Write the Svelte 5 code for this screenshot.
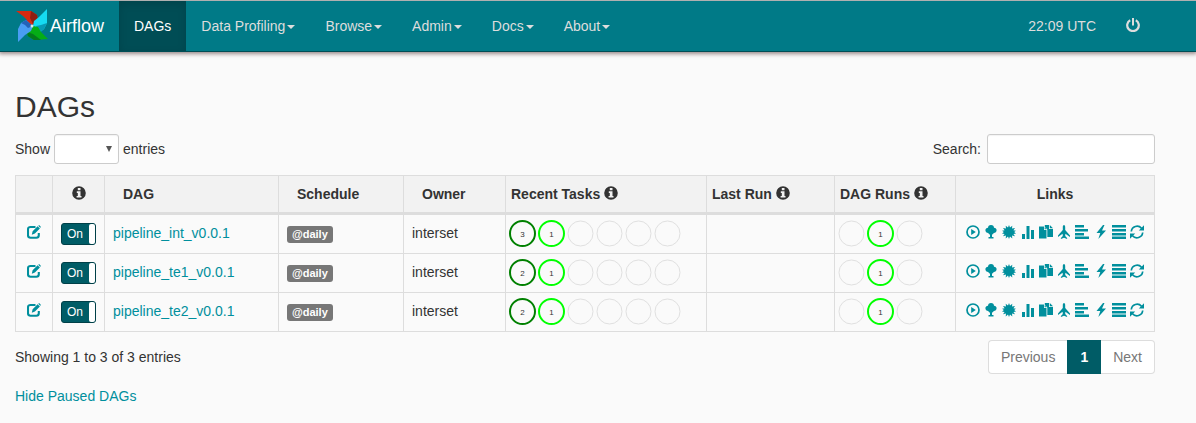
<script>
  const menus = ['Data Profiling', 'Browse', 'Admin', 'Docs', 'About'];

  const dags = $state([
    { id: 'pipeline_int_v0.0.1', on: true, schedule: '@daily', owner: 'interset', tasks: [3, 1, 0, 0, 0, 0], runs: [0, 1, 0] },
    { id: 'pipeline_te1_v0.0.1', on: true, schedule: '@daily', owner: 'interset', tasks: [2, 1, 0, 0, 0, 0], runs: [0, 1, 0] },
    { id: 'pipeline_te2_v0.0.1', on: true, schedule: '@daily', owner: 'interset', tasks: [2, 1, 0, 0, 0, 0], runs: [0, 1, 0] }
  ]);

  const taskColors = ['green', 'lime', 'red', 'gold', 'pink', 'gray'];
  const runColors = ['green', 'lime', 'red'];
  const links = [
    ['play', 'Trigger Dag'],
    ['tree', 'Tree View'],
    ['sun', 'Graph View'],
    ['stats', 'Tasks Duration'],
    ['copy', 'Task Tries'],
    ['plane', 'Landing Times'],
    ['align', 'Gantt View'],
    ['flash', 'Code View'],
    ['list', 'Logs'],
    ['refresh', 'Refresh']
  ];
</script>

{#snippet icon(name)}
  <svg class="icon" viewBox="0 0 14 14" width="14" height="14" fill="currentColor" aria-hidden="true">
    {#if name === 'info'}
      <path fill-rule="evenodd" d="M7 .2a6.8 6.8 0 1 0 0 13.600A6.800 6.800 0 0 0 7 .2ZM5.800 2h2.700v2.200H5.800ZM4.800 5.300h3.700v4.600h1v1.600H4.600V9.900h1.200V6.900h-1Z" />
    {:else if name === 'power'}
      <path d="M6 0h2v7.500H6Z" />
      <path d="M4.200 2.200a5.800 5.800 0 1 0 5.600 0" fill="none" stroke="currentColor" stroke-width="2.200" />
    {:else if name === 'edit'}
      <path d="M8.500 2H3.500Q1 2 1 4.500v5.800Q1 12.800 3.500 12.800h5.800q2.500 0 2.500-2.500V8" fill="none" stroke="currentColor" stroke-width="2.100" />
      <path d="m4.800 9.700.8-3.400 5-5 2.300 2.300-5 5ZM11.300.8l.8-.8L14 1.900l-.8.8Z" />
    {:else if name === 'play'}
      <circle cx="7" cy="7" r="6" fill="none" stroke="currentColor" stroke-width="1.700" />
      <path d="M5.200 4 9.800 7l-4.600 3Z" />
    {:else if name === 'tree'}
      <path d="M7 0c2 0 3 1.200 3 2.700 1.600 0 2.600 1 2.600 2.500S11.400 8 9.800 8C9 9.200 8.400 9.600 8 9.600V12h1.500v1.500h-5V12H6V9.600C5.400 9.600 5 9 4.200 8 2.600 8 1.400 6.800 1.400 5.200S2.500 2.700 4 2.700C4 1.200 5 0 7 0Z" />
    {:else if name === 'sun'}
      <path d="m7 0 1 2.600L10.300.7l-.3 2.900 3-.6-1.600 2.200 2.600.5L12.100 7l1.900 1.600-2.600.3L13 11.300l-3-.7.3 2.800L8 11.500 7 14l-1-2.500-2.300 1.900.3-2.800-3 .7 1.600-2.400L0 8.600 1.900 7 0 5.700l2.600-.5L1 3l3 .6-.3-2.900L6 2.600Z" />
    {:else if name === 'stats'}
      <path d="M1 9h3v5H1ZM5.500 1h3v13h-3ZM10 5h3v9h-3Z" />
    {:else if name === 'copy'}
      <path fill-rule="evenodd" d="M0 1.500h5V5h2.500v8.500H0ZM5.800 0H10v4h4v8H8.300V4.500L5.800 2ZM10.800 0 14 3.200h-3.200Z" />
      <path d="M5.600 2.300 7.600 4.300h-2Z" />
    {:else if name === 'plane'}
      <path d="M7 0C7.800 0 8.200 1 8.200 2.200V5l4.800 5.500V12L8.400 8.700 8.200 11l1.900 1.900V14L7 12.800 3.900 14v-1.100L5.800 11l-.2-2.300L1 12v-1.500L5.800 5V2.200C5.800 1 6.200 0 7 0Z" />
    {:else if name === 'align'}
      <path d="M0 0h9v2.500H0ZM0 4h13v2.500H0ZM0 8h9v2.500H0ZM0 11.500h14V14H0Z" />
    {:else if name === 'flash'}
      <path d="M9 0 2.500 8h3.800l-2 6L12 5.500H8L10.500 0Z" />
    {:else if name === 'list'}
      <path d="M0 0h14v2.500H0ZM0 4h14v2.500H0ZM0 8h14v2.500H0ZM0 11.500h14V14H0Z" />
    {:else if name === 'refresh'}
      <path d="M1.300 6.500A5.800 5.800 0 0 1 11.500 3.300M12.700 7.500A5.800 5.800 0 0 1 2.500 10.700" fill="none" stroke="currentColor" stroke-width="1.700" />
      <path d="M14 .3v5.200H8.800ZM0 13.700V8.500h5.200Z" />
    {/if}
  </svg>
{/snippet}

{#snippet circles(counts, colors)}
  <svg class="circles" width={counts.length * 29 + 2} height="28" role="img" aria-label="State counts">
    {#each counts as n, i}
      <circle cx={16.5 + i * 29} cy="13.5" r="12.5" fill="none" stroke={n ? colors[i] : '#e0e0e0'} stroke-width={n ? 2 : 1} />
      {#if n}<text x={16.5 + i * 29} y="17" text-anchor="middle">{n}</text>{/if}
    {/each}
  </svg>
{/snippet}

<nav class="navbar">
  <a class="brand" href="#home">
    <svg width="34" height="34" viewBox="0 0 34 34" aria-hidden="true">
      <path d="M1 2h15l6 4 1 6-6 4-6-1 1-4-4-4Z" fill="#d82a10" />
      <path d="m16 2 6 4 1 6-5 3-3-6Z" fill="#8f1e10" />
      <path d="M32 0v14l-3 6-5 4-6-7 1-5 5-4Z" fill="#15dbf2" />
      <path d="m32 14-3 6-5 4-3-7 5-1Z" fill="#079ab5" />
      <path d="m18 17 5 1 3 5 7 7-14 1-6-4-2-5 5-4Z" fill="#05ad16" />
      <path d="m12 23 6 2 8 6h-7l-6-4Z" fill="#047b1c" />
      <path d="M3 33V20l3-6 5-3 7 6-2 5-6 4Z" fill="#499df4" />
      <path d="m6 14 5-3 7 6-5 2-3-3Z" fill="#2463b8" />
      <circle cx="17" cy="17" r="1.500" fill="#d8ede6" />
    </svg>
    <span>Airflow</span>
  </a>
  <a class="item active" href="#dags">DAGs</a>
  {#each menus as menu}
    <a class="item" href="#menu">{menu}<span class="caret"></span></a>
  {/each}
  <span class="item clock">22:09 UTC</span>
  <a class="item power" href="#logout" aria-label="Log out">{@render icon('power')}</a>
</nav>

<main>
  <h2>DAGs</h2>
  <div class="bar">
    <label class="length">
      Show
      <span class="select-wrap">
        <select aria-label="Entries per page"><option></option><option>25</option><option>50</option></select>
        <svg width="6" height="6" viewBox="0 0 6 6" aria-hidden="true"><path d="M0 0h6L3 6Z" fill="#555" /></svg>
      </span>
      entries
    </label>
    <label class="search">Search: <input type="search" /></label>
  </div>

  <table>
    <colgroup>
      <col class="c-edit" /><col class="c-toggle" /><col /><col class="c-schedule" /><col class="c-owner" />
      <col class="c-tasks" /><col class="c-last" /><col class="c-runs" /><col class="c-links" />
    </colgroup>
    <thead>
      <tr>
        <th></th>
        <th class="center">{@render icon('info')}</th>
        <th class="wide">DAG</th>
        <th class="wide">Schedule</th>
        <th class="wide">Owner</th>
        <th>Recent Tasks {@render icon('info')}</th>
        <th>Last Run {@render icon('info')}</th>
        <th>DAG Runs {@render icon('info')}</th>
        <th class="center">Links</th>
      </tr>
    </thead>
    <tbody>
      {#each dags as dag}
        <tr>
          <td class="center"><a href="#edit" aria-label="Edit {dag.id}">{@render icon('edit')}</a></td>
          <td class="switch">
            <label class="toggle" class:off={!dag.on}>
              <input type="checkbox" bind:checked={dag.on} aria-label="{dag.id} enabled" />
              <span>{dag.on ? 'On' : 'Off'}</span>
            </label>
          </td>
          <td><a href="#graph">{dag.id}</a></td>
          <td class="switch"><a class="badge" href="#schedule">{dag.schedule}</a></td>
          <td>{dag.owner}</td>
          <td class="dots">{@render circles(dag.tasks, taskColors)}</td>
          <td></td>
          <td class="dots">{@render circles(dag.runs, runColors)}</td>
          <td>
            <div class="links">
              {#each links as [name, title]}
                <a href="#{name}" aria-label={title}>{@render icon(name)}</a>
              {/each}
            </div>
          </td>
        </tr>
      {/each}
    </tbody>
  </table>

  <div class="bar footer">
    <span>Showing 1 to 3 of 3 entries</span>
    <div class="pages">
      <button disabled>Previous</button>
      <button class="current">1</button>
      <button disabled>Next</button>
    </div>
  </div>
  <a class="paused" href="#paused">Hide Paused DAGs</a>
</main>

<style>
  :global(body) {
    background: #fafafa;
    color: #333;
    font: 14px/20px "Liberation Sans", Arial, sans-serif;
  }
  :global(*) { box-sizing: border-box; }
  a { color: #008f9d; text-decoration: none; }
  .icon { display: inline-block; vertical-align: -1px; }

  .navbar {
    display: flex;
    height: 52px;
    padding: 0 41px 0 15px;
    background: #007a87;
    border-top: 1px solid #b0b0b0;
    border-bottom: 1px solid #004d55;
    box-shadow: 0 1px 4px 1px rgba(60, 30, 30, .5);
  }
  .brand {
    display: flex;
    align-items: center;
    width: 104px;
    color: #fff;
    font-size: 18px;
    gap: 1px;
  }
  .brand svg { flex: none; }
  .item {
    display: flex;
    align-items: center;
    padding: 0 15px;
    color: #ddd;
    white-space: nowrap;
  }
  .item.active {
    color: #fff;
    background: #004d55;
    box-shadow: inset 0 3px 8px rgba(0, 0, 0, .13);
  }
  .caret {
    border: 4px solid transparent;
    border-top-color: #ddd;
    border-bottom: 0;
    margin: 2px 0 0 2px;
  }
  .clock { margin-left: auto; }
  .power .icon { margin-bottom: 2px; }

  main { padding: 36px 41px 20px 15px; }
  h2 { margin: 0; font-size: 30px; line-height: 38px; font-weight: 400; }
  .bar { display: flex; justify-content: space-between; margin-top: 8px; }
  .length, .search { display: flex; align-items: center; gap: 4px; line-height: 18px; }
  .length, .search { padding-bottom: 0; }
  .search { gap: 6px; }
  .select-wrap { position: relative; display: flex; }
  .select-wrap svg { position: absolute; right: 7px; top: 12px; pointer-events: none; }
  select, .search input {
    height: 30px;
    margin: 0;
    padding: 4px 8px;
    border: 1px solid #ccc;
    border-radius: 3px;
    background: #fff;
    color: #555;
    font: inherit;
    appearance: none;
    box-shadow: inset 0 1px 1px rgba(0, 0, 0, .05);
  }
  select { width: 65px; }
  .search input { width: 168px; }

  table {
    width: 100%;
    margin-top: 11px;
    table-layout: fixed;
    border-collapse: separate;
    border-spacing: 0;
    border: solid #ddd;
    border-width: 1px 0 0 1px;
  }
  .c-edit { width: 37px; }
  .c-toggle { width: 52px; }
  .c-schedule { width: 125px; }
  .c-owner { width: 102px; }
  .c-tasks { width: 201px; }
  .c-last { width: 128px; }
  .c-runs { width: 121px; }
  .c-links { width: 199px; }
  th, td {
    height: 39px;
    border: solid #ddd;
    border-width: 0 1px 1px 0;
    text-align: left;
    white-space: nowrap;
  }
  th { padding: 0 5px; background: #f2f2f2; border-bottom-width: 3px; }
  th.wide { padding-left: 18px; }
  td { padding: 0 8px 2px; }
  th.center, td.center { text-align: center; padding: 0 0 2px; }
  th.center { padding: 0; }
  td .icon { display: block; margin: 0 auto 2px; }
  td.switch { padding-bottom: 0; }
  td.dots { padding: 0; }
  .circles { display: block; }
  .circles text { font-size: 8px; fill: #333; }
  .links { display: flex; justify-content: space-between; padding: 0 2px; }

  .toggle {
    position: relative;
    display: block;
    width: 35px;
    height: 22px;
    padding-left: 5px;
    background: #005c66;
    border: 1px solid #004048;
    border-radius: 3px;
    color: #fff;
    font-size: 12px;
    line-height: 20px;
    cursor: pointer;
  }
  .toggle::after {
    content: "";
    position: absolute;
    top: 0;
    right: 0;
    width: 6px;
    height: 20px;
    background: #fff;
    border-radius: 2px;
  }
  .toggle.off { background: #aaa; }
  .toggle input { position: absolute; inset: 0; margin: 0; opacity: 0; }
  .badge {
    display: block;
    width: fit-content;
    padding: 0 5px;
    border-radius: 3px;
    background: #777;
    color: #fff;
    font-size: 11px;
    font-weight: 700;
    line-height: 17px;
  }

  .footer { align-items: center; }
  .pages { display: flex; }
  .pages button {
    height: 34px;
    margin: 0;
    padding: 0 12px;
    border: 1px solid #ddd;
    background: #fff;
    color: #777;
    font: inherit;
  }
  .pages button:first-child { border-right: 0; border-radius: 4px 0 0 4px; }
  .pages button:last-child { border-left: 0; border-radius: 0 4px 4px 0; }
  .pages .current { border-color: #005c66; background: #005c66; color: #fff; font-weight: 700; }
  .paused { display: inline-block; margin-top: 12px; }
</style>
